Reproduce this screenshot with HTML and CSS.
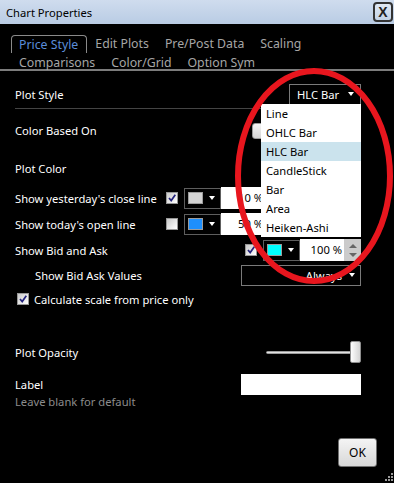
FILE: index.html
```html
<!DOCTYPE html>
<html lang="en">
<head>
    <meta charset="UTF-8">
    <meta name="viewport" content="width=device-width, initial-scale=1.0">
    <title>Chart Properties</title>
    <link rel="stylesheet" href="styles.css">
</head>
<body>
    <div class="window">

        <div class="titlebar">
            <span class="title">Chart Properties</span>
            <span class="close">X</span>
        </div>

        <div class="tabs">
            <div class="tab-row top">
                <span class="tab active">Price Style</span>
                <span class="tab">Edit Plots</span>
                <span class="tab">Pre/Post Data</span>
                <span class="tab">Scaling</span>
            </div>
            <div class="tab-row bottom">
                <span class="tab">Comparisons</span>
                <span class="tab">Color/Grid</span>
                <span class="tab">Option Sym</span>
            </div>
        </div>

        <div class="panel">
            <div class="row row-style">
                <span>Plot Style</span>
                <div class="select select-style">
                    <span>HLC Bar</span>
                    <span class="arrow"></span>
                </div>
            </div>
            <div class="sep"></div>

            <div class="row row-based">
                <span>Color Based On</span>
                <div class="combo-light"></div>
            </div>

            <div class="row row-color">
                <span>Plot Color</span>
            </div>

            <div class="row row-line">
                <span class="line-label">Show yesterday's close line</span>
                <div class="group">
                    <span class="checkbox"><svg width="10" height="10" viewBox="0 0 10 10"><path d="M2 5 L4.2 7.6 L8.3 1.8" stroke="#23237c" stroke-width="1.7" fill="none"/></svg></span>
                    <div class="combo"><span class="swatch grey"></span><span class="arrow"></span></div>
                    <div class="num">10 %</div>
                    <div class="spin"><span class="up"></span><span class="down"></span></div>
                </div>
            </div>

            <div class="row row-line">
                <span class="line-label">Show today's open line</span>
                <div class="group">
                    <span class="checkbox"></span>
                    <div class="combo"><span class="swatch blue"></span><span class="arrow"></span></div>
                    <div class="num">50 %</div>
                    <div class="spin"><span class="up"></span><span class="down"></span></div>
                </div>
            </div>

            <div class="row row-line">
                <span>Show Bid and Ask</span>
                <div class="group right">
                    <span class="checkbox"><svg width="10" height="10" viewBox="0 0 10 10"><path d="M2 5 L4.2 7.6 L8.3 1.8" stroke="#23237c" stroke-width="1.7" fill="none"/></svg></span>
                    <div class="combo"><span class="swatch cyan"></span><span class="arrow"></span></div>
                    <div class="num">100 %</div>
                    <div class="spin"><span class="up"></span><span class="down"></span></div>
                </div>
            </div>

            <div class="row row-values">
                <span class="indent">Show Bid Ask Values</span>
                <div class="select select-wide">
                    <span>Always</span>
                    <span class="arrow"></span>
                </div>
            </div>

            <div class="row row-calc">
                <span class="checkbox"><svg width="10" height="10" viewBox="0 0 10 10"><path d="M2 5 L4.2 7.6 L8.3 1.8" stroke="#23237c" stroke-width="1.7" fill="none"/></svg></span>
                <span>Calculate scale from price only</span>
            </div>

            <div class="row row-opacity">
                <span>Plot Opacity</span>
                <div class="slider">
                    <span class="track"></span>
                    <span class="thumb"></span>
                </div>
            </div>

            <div class="row row-label">
                <div class="label-text">
                    <div>Label</div>
                    <div class="hint">Leave blank for default</div>
                </div>
                <div class="text-input"></div>
            </div>
        </div>

        <div class="footer">
            <button class="ok">OK</button>
        </div>

        <svg class="grip" width="8" height="8" viewBox="0 0 8 8">
            <rect x="6" y="0" width="2" height="2" fill="#9a9a9a"/>
            <rect x="3" y="3" width="2" height="2" fill="#9a9a9a"/>
            <rect x="6" y="3" width="2" height="2" fill="#9a9a9a"/>
            <rect x="0" y="6" width="2" height="2" fill="#9a9a9a"/>
            <rect x="3" y="6" width="2" height="2" fill="#9a9a9a"/>
            <rect x="6" y="6" width="2" height="2" fill="#9a9a9a"/>
        </svg>

        <!-- open plot style list -->
        <ul class="dropdown">
            <li>Line</li>
            <li>OHLC Bar</li>
            <li class="selected">HLC Bar</li>
            <li>CandleStick</li>
            <li>Bar</li>
            <li>Area</li>
            <li>Heiken-Ashi</li>
        </ul>

        <svg class="annotation" width="394" height="483" viewBox="0 0 394 483">
            <ellipse cx="314" cy="176" rx="76" ry="105" fill="none" stroke="#e8161e" stroke-width="6"/>
        </svg>
    </div>
</body>
</html>
```

FILE: styles.css
```css
* {
    box-sizing: border-box;
}

body {
    margin: 0;
    background-color: #000;
    font-family: "Noto Sans", "Open Sans", sans-serif;
    font-size: 11.2px;
    color: #fff;
}

.window {
    position: relative;
    width: 394px;
    height: 483px;
    overflow: hidden;
    background-color: #000;
}

.titlebar {
    height: 24px;
    display: flex;
    align-items: center;
    justify-content: space-between;
    padding: 0 1px 0 6px;
    background: linear-gradient(#cfdcee, #b9cce4);
    color: #000;
}

.close {
    width: 20px;
    height: 20px;
    border: 2px solid #333;
    border-radius: 4px;
    display: flex;
    align-items: center;
    justify-content: center;
    font-family: "Liberation Sans", sans-serif;
    font-weight: bold;
    font-size: 14px;
    color: #222;
    background: linear-gradient(#dfe8f3, #c3d3e7);
}


.tabs {
    height: 47px;
    padding: 11px 0 0 11px;
    border-bottom: 2px solid #7c7c7c;
}

.tab-row {
    display: flex;
    font-size: 12.3px;
    color: #a6a6a6;
}

.tab-row.top {
    height: 18px;
    line-height: 18px;
}

.tab-row.bottom {
    height: 16px;
    line-height: 19px;
}

.tab {
    padding: 0 8px;
}

.tab.active {
    padding: 0 8px 0 7px;
    border: 1px solid #8a8a8a;
    border-bottom: none;
    border-radius: 4px 4px 0 0;
    color: #5b8dd9;
}


.panel {
    padding: 0 33px 0 15px;
}

.row {
    display: flex;
    align-items: center;
}

.row-style {
    margin-top: 9px;
    height: 28px;
}

.sep {
    height: 1px;
    background-color: #444;
}

.row-based {
    height: 42px;
}

.row-color {
    height: 34px;
}

.row-line {
    height: 26px;
}

.row-values,
.row-calc {
    height: 24px;
}

.row-opacity {
    margin-top: 27px;
    height: 28px;
}

.row-label {
    margin-top: 10px;
    align-items: flex-start;
}

.line-label {
    width: 151px;
}

.indent {
    padding-left: 20px;
}

.group {
    display: flex;
    align-items: center;
}

.group.right {
    margin-left: auto;
}

.checkbox {
    width: 12px;
    height: 12px;
    border: 1px solid #979797;
    background: linear-gradient(135deg, #c9c9c9, #ffffff);
    display: flex;
    align-items: center;
    justify-content: center;
}

.row-calc .checkbox {
    margin: 0 5px 0 2px;
}

.combo {
    width: 37px;
    height: 21px;
    margin-left: 6px;
    border: 1px solid #5e5e5e;
    display: flex;
    align-items: center;
    padding-left: 3px;
}

.swatch {
    width: 15px;
    height: 12px;
    border: 1px solid #9c9c9c;
}

.swatch.grey {
    background-color: #d3d3d3;
}

.swatch.blue {
    background-color: #1e8ffc;
}

.swatch.cyan {
    background-color: #00ffff;
}

.arrow {
    width: 0;
    height: 0;
    border-left: 3.5px solid transparent;
    border-right: 3.5px solid transparent;
    border-top: 4px solid #fff;
}

.combo .arrow {
    margin-left: 6px;
}

.num {
    width: 44px;
    height: 22px;
    background-color: #fff;
    color: #000;
    text-align: right;
    padding-right: 2px;
    line-height: 22px;
}

.spin {
    width: 17px;
    height: 22px;
    background-color: #cbcbcb;
    display: flex;
    flex-direction: column;
    justify-content: space-around;
    align-items: center;
    padding: 2px 0;
}

.spin .up {
    border-left: 4px solid transparent;
    border-right: 4px solid transparent;
    border-bottom: 4px solid #666;
}

.spin .down {
    border-left: 4px solid transparent;
    border-right: 4px solid transparent;
    border-top: 4px solid #666;
}

.select {
    margin-left: auto;
    height: 21px;
    border: 1px solid #7a7a7a;
    display: flex;
    align-items: center;
}

.select-style {
    width: 72px;
    padding-left: 7px;
}

.select-style .arrow {
    margin-left: 9px;
}

.select-wide {
    width: 120px;
    justify-content: flex-end;
    padding-right: 5px;
}

.select-wide .arrow {
    margin-left: 7px;
}

.combo-light {
    margin-left: auto;
    margin-top: 2px;
    width: 109px;
    height: 16px;
    border: 1px solid #9a9a9a;
    border-radius: 3px;
    background: linear-gradient(#f4f4f4, #d6d6d6);
}

.slider {
    margin-left: auto;
    width: 95px;
    height: 22px;
    display: flex;
    align-items: center;
}

.slider .track {
    flex: 1;
    height: 3px;
    border: 1px solid #9d9d9d;
    background-color: #e2e2e2;
    border-radius: 2px;
}

.slider .thumb {
    width: 11px;
    height: 22px;
    margin-left: -5px;
    border: 1px solid #8e8e8e;
    border-radius: 2px;
    background: linear-gradient(90deg, #fdfdfd, #d4d4d4);
}

.label-text {
    line-height: 17px;
}

.hint {
    color: #8c8c8c;
}

.text-input {
    margin-left: auto;
    margin-top: -2px;
    width: 120px;
    height: 21px;
    background-color: #fff;
}

.footer {
    display: flex;
    justify-content: flex-end;
    padding: 28px 17px 0 0;
}

.ok {
    width: 39px;
    height: 29px;
    border: 1px solid #707070;
    border-radius: 3px;
    background: linear-gradient(#f4f4f4, #d8d8d8);
    font-family: "Noto Sans", sans-serif;
    font-size: 12px;
    color: #000;
    padding: 0;
}

.grip {
    position: absolute;
    right: 1px;
    bottom: 2px;
}

.dropdown {
    position: absolute;
    left: 261px;
    top: 104px;
    width: 100px;
    margin: 0;
    padding: 0;
    list-style-type: none;
    background-color: #fff;
    color: #000;
}

.dropdown li {
    height: 19px;
    line-height: 19px;
    padding-left: 5px;
}

.dropdown li.selected {
    background-color: #cbe3ed;
}

.annotation {
    position: absolute;
    left: 0;
    top: 0;
    pointer-events: none;
}
```
